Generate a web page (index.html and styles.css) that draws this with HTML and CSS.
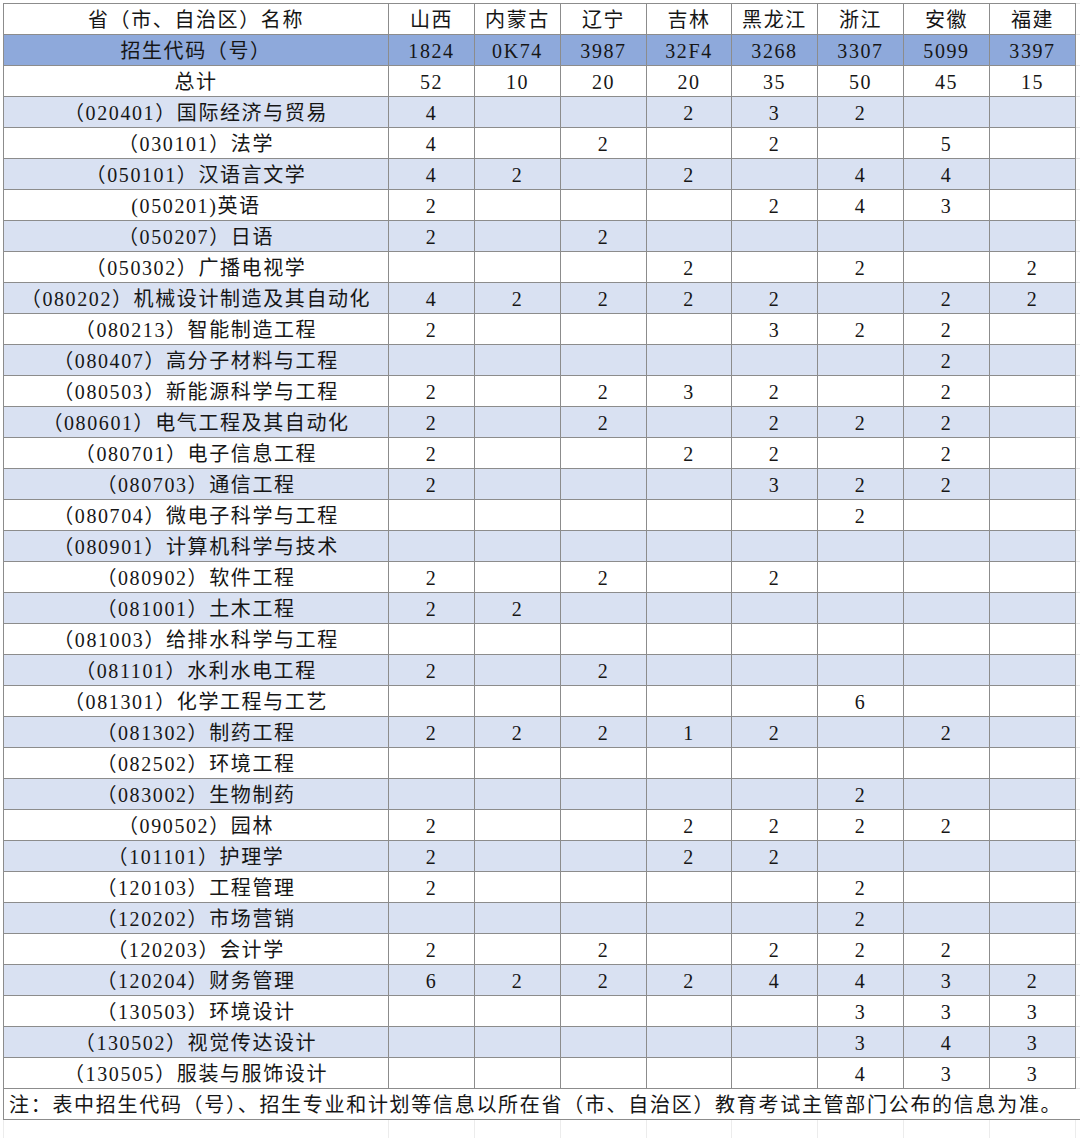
FILE: index.html
```html
<!DOCTYPE html>
<html lang="zh-CN">
<head>
<meta charset="utf-8">
<title>招生计划</title>
<link rel="stylesheet" href="styles.css">
</head>
<body>
<div class="sheet">
<table class="plan">
<colgroup>
<col class="c-name"><col class="c-p"><col class="c-p"><col class="c-p"><col class="c-p4"><col class="c-p"><col class="c-p"><col class="c-p"><col class="c-p"><col class="c-extra">
</colgroup>
<tbody>
<tr><td>省（市、自治区）名称</td><td>山西</td><td>内蒙古</td><td>辽宁</td><td>吉林</td><td>黑龙江</td><td>浙江</td><td>安徽</td><td>福建</td><td class="x"></td></tr>
<tr class="code"><td>招生代码（号）</td><td>1824</td><td>0K74</td><td>3987</td><td>32F4</td><td>3268</td><td>3307</td><td>5099</td><td>3397</td><td class="x"></td></tr>
<tr><td>总计</td><td>52</td><td>10</td><td>20</td><td>20</td><td>35</td><td>50</td><td>45</td><td>15</td><td class="x"></td></tr>
<tr class="alt"><td>（020401）国际经济与贸易</td><td>4</td><td></td><td></td><td>2</td><td>3</td><td>2</td><td></td><td></td><td class="x"></td></tr>
<tr><td>（030101）法学</td><td>4</td><td></td><td>2</td><td></td><td>2</td><td></td><td>5</td><td></td><td class="x"></td></tr>
<tr class="alt"><td>（050101）汉语言文学</td><td>4</td><td>2</td><td></td><td>2</td><td></td><td>4</td><td>4</td><td></td><td class="x"></td></tr>
<tr><td>(050201)英语</td><td>2</td><td></td><td></td><td></td><td>2</td><td>4</td><td>3</td><td></td><td class="x"></td></tr>
<tr class="alt"><td>（050207）日语</td><td>2</td><td></td><td>2</td><td></td><td></td><td></td><td></td><td></td><td class="x"></td></tr>
<tr><td>（050302）广播电视学</td><td></td><td></td><td></td><td>2</td><td></td><td>2</td><td></td><td>2</td><td class="x"></td></tr>
<tr class="alt"><td>（080202）机械设计制造及其自动化</td><td>4</td><td>2</td><td>2</td><td>2</td><td>2</td><td></td><td>2</td><td>2</td><td class="x"></td></tr>
<tr><td>（080213）智能制造工程</td><td>2</td><td></td><td></td><td></td><td>3</td><td>2</td><td>2</td><td></td><td class="x"></td></tr>
<tr class="alt"><td>（080407）高分子材料与工程</td><td></td><td></td><td></td><td></td><td></td><td></td><td>2</td><td></td><td class="x"></td></tr>
<tr><td>（080503）新能源科学与工程</td><td>2</td><td></td><td>2</td><td>3</td><td>2</td><td></td><td>2</td><td></td><td class="x"></td></tr>
<tr class="alt"><td>（080601）电气工程及其自动化</td><td>2</td><td></td><td>2</td><td></td><td>2</td><td>2</td><td>2</td><td></td><td class="x"></td></tr>
<tr><td>（080701）电子信息工程</td><td>2</td><td></td><td></td><td>2</td><td>2</td><td></td><td>2</td><td></td><td class="x"></td></tr>
<tr class="alt"><td>（080703）通信工程</td><td>2</td><td></td><td></td><td></td><td>3</td><td>2</td><td>2</td><td></td><td class="x"></td></tr>
<tr><td>（080704）微电子科学与工程</td><td></td><td></td><td></td><td></td><td></td><td>2</td><td></td><td></td><td class="x"></td></tr>
<tr class="alt"><td>（080901）计算机科学与技术</td><td></td><td></td><td></td><td></td><td></td><td></td><td></td><td></td><td class="x"></td></tr>
<tr><td>（080902）软件工程</td><td>2</td><td></td><td>2</td><td></td><td>2</td><td></td><td></td><td></td><td class="x"></td></tr>
<tr class="alt"><td>（081001）土木工程</td><td>2</td><td>2</td><td></td><td></td><td></td><td></td><td></td><td></td><td class="x"></td></tr>
<tr><td>（081003）给排水科学与工程</td><td></td><td></td><td></td><td></td><td></td><td></td><td></td><td></td><td class="x"></td></tr>
<tr class="alt"><td>（081101）水利水电工程</td><td>2</td><td></td><td>2</td><td></td><td></td><td></td><td></td><td></td><td class="x"></td></tr>
<tr><td>（081301）化学工程与工艺</td><td></td><td></td><td></td><td></td><td></td><td>6</td><td></td><td></td><td class="x"></td></tr>
<tr class="alt"><td>（081302）制药工程</td><td>2</td><td>2</td><td>2</td><td>1</td><td>2</td><td></td><td>2</td><td></td><td class="x"></td></tr>
<tr><td>（082502）环境工程</td><td></td><td></td><td></td><td></td><td></td><td></td><td></td><td></td><td class="x"></td></tr>
<tr class="alt"><td>（083002）生物制药</td><td></td><td></td><td></td><td></td><td></td><td>2</td><td></td><td></td><td class="x"></td></tr>
<tr><td>（090502）园林</td><td>2</td><td></td><td></td><td>2</td><td>2</td><td>2</td><td>2</td><td></td><td class="x"></td></tr>
<tr class="alt"><td>（101101）护理学</td><td>2</td><td></td><td></td><td>2</td><td>2</td><td></td><td></td><td></td><td class="x"></td></tr>
<tr><td>（120103）工程管理</td><td>2</td><td></td><td></td><td></td><td></td><td>2</td><td></td><td></td><td class="x"></td></tr>
<tr class="alt"><td>（120202）市场营销</td><td></td><td></td><td></td><td></td><td></td><td>2</td><td></td><td></td><td class="x"></td></tr>
<tr><td>（120203）会计学</td><td>2</td><td></td><td>2</td><td></td><td>2</td><td>2</td><td>2</td><td></td><td class="x"></td></tr>
<tr class="alt"><td>（120204）财务管理</td><td>6</td><td>2</td><td>2</td><td>2</td><td>4</td><td>4</td><td>3</td><td>2</td><td class="x"></td></tr>
<tr><td>（130503）环境设计</td><td></td><td></td><td></td><td></td><td></td><td>3</td><td>3</td><td>3</td><td class="x"></td></tr>
<tr class="alt"><td>（130502）视觉传达设计</td><td></td><td></td><td></td><td></td><td></td><td>3</td><td>4</td><td>3</td><td class="x"></td></tr>
<tr><td>（130505）服装与服饰设计</td><td></td><td></td><td></td><td></td><td></td><td>4</td><td>3</td><td>3</td><td class="x"></td></tr>
<tr class="note"><td colspan="10">注：表中招生代码（号）、招生专业和计划等信息以所在省（市、自治区）教育考试主管部门公布的信息为准。</td></tr>
<tr class="blank"><td></td><td></td><td></td><td></td><td></td><td></td><td></td><td></td><td></td><td></td></tr>
</tbody>
</table>
</div>
</body>
</html>
```

FILE: styles.css
```css
html, body {
  margin: 0;
  padding: 0;
  background: #ffffff;
}

.sheet {
  width: 1080px;
  height: 1138px;
  overflow: hidden;
  padding: 3px 0 0 3px;
  box-sizing: border-box;
}

.plan {
  border-collapse: collapse;
  table-layout: fixed;
  width: 1172px;
  font-family: "Liberation Serif", "Noto Sans CJK SC", serif;
  font-size: 20px;
  color: #161616;
}

.c-name { width: 385px; }
.c-p { width: 86px; }
.c-p4 { width: 85px; }
.c-extra { width: 100px; }

.plan td {
  height: 28px;
  padding: 2px 0 0 0;
  line-height: 24px;
  text-align: center;
  white-space: nowrap;
  letter-spacing: 1.6px;
  border: 1px solid #8c8c8c;
  overflow: hidden;
}

.plan td.x {
  border-left-color: #a8a8a8;
  border-right-color: #e2e2e2;
  border-top-color: #e6e6e6;
  border-bottom-color: #e6e6e6;
  background: #ffffff;
}

.plan tr.code td {
  background: #8ea9db;
}

.plan tr.alt td {
  background: #d9e1f2;
}

.plan tr.code td.x,
.plan tr.alt td.x {
  background: #ffffff;
}

.plan tr.note td {
  text-align: left;
  padding-left: 5px;
  letter-spacing: 1.7px;
  overflow: visible;
}

.plan tr.blank td {
  height: 24px;
  padding: 0;
  border-color: #ececec;
  border-top-color: #8c8c8c;
}
```
